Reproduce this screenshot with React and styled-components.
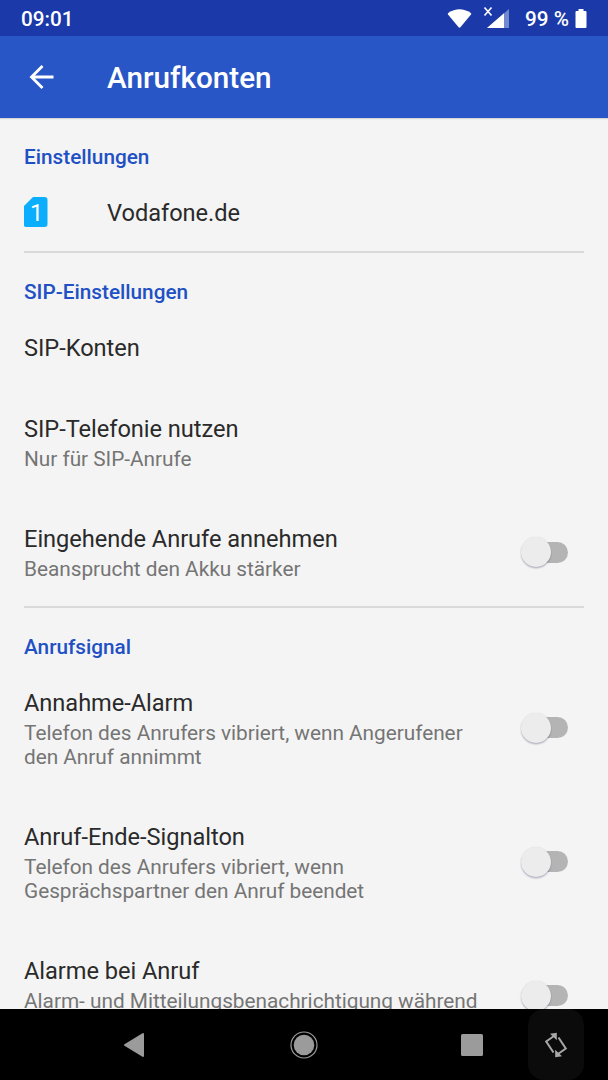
import React from "react";
import styled, { createGlobalStyle } from "styled-components";

const GlobalStyle = createGlobalStyle`
  * { box-sizing: border-box; }
  body { margin: 0; background: #000; }
`;

const Screen = styled.div`
  width: 608px;
  height: 1080px;
  display: flex;
  flex-direction: column;
  overflow: hidden;
  background: #f4f4f4;
  font-family: Roboto, "Liberation Sans", sans-serif;
`;

const StatusBar = styled.header`
  flex: 0 0 36px;
  display: flex;
  align-items: center;
  justify-content: space-between;
  padding: 2px 21px 0 21px;
  background: #1b39a8;
  color: #fff;
  font-size: 20.700px;
  font-weight: 500;
  line-height: 34px;
`;

const StatusIcons = styled.div`
  display: flex;
  align-items: center;
  svg { display: block; }
`;

const Percent = styled.span`
  margin: 0 6px 0 15px;
`;

const Toolbar = styled.div`
  flex: 0 0 82px;
  display: flex;
  align-items: center;
  padding-left: 29px;
  background: #2956c6;
  color: #fff;
  box-shadow: 0 1px 1px rgba(0, 0, 0, 0.12);
`;

const BackIcon = styled.svg`
  width: 26px;
  height: 26px;
  flex: none;
`;

const Title = styled.h1`
  margin: 2px 0 0 52px;
  font-size: 29.700px;
  font-weight: 500;
  line-height: 36px;
`;

const Content = styled.main`
  flex: 1 1 0;
  min-height: 0;
  overflow: hidden;
  padding: 0 24px;
`;

const Section = styled.section`
  & + & { border-top: 2px solid #d9d9d9; }
`;

const SectionTitle = styled.h2`
  height: 54px;
  margin: 0;
  padding-top: 26px;
  color: #2150c4;
  font-size: 20.750px;
  font-weight: 500;
  line-height: 26px;
`;

const Row = styled.div`
  height: ${(p) => p.$height}px;
  display: flex;
  padding-top: 26px;
`;

const SimSlot = styled.div`
  width: 83px;
  flex: none;
  margin-top: -2px;
`;

const Texts = styled.div`
  flex: 1;
  min-width: 0;
`;

const Label = styled.div`
  color: #2a2a2a;
  font-size: 23.625px;
  letter-spacing: -0.04px;
  line-height: 30px;
`;

const Summary = styled.div`
  margin-top: 3px;
  color: #757575;
  font-size: 20.800px;
  letter-spacing: -0.02px;
  line-height: 24px;
  white-space: pre-line;
`;

const SwitchSlot = styled.div`
  height: ${(p) => p.$height}px;
  display: flex;
  align-items: center;
`;

const Track = styled.div`
  width: 42px;
  height: 21px;
  margin-right: 16px;
  border-radius: 11px;
  background: #b4b4b4;
  display: flex;
  align-items: center;
`;

const Thumb = styled.div`
  flex: none;
  width: 30px;
  height: 30px;
  margin-left: -5.5px;
  border-radius: 50%;
  background: #ececec;
  box-shadow: 0 1.5px 1.5px rgba(60, 60, 110, 0.32), 0 0 1px rgba(0, 0, 0, 0.12);
`;

const NavBar = styled.nav`
  flex: 0 0 71px;
  display: grid;
  grid-template-columns: 50px 168px 172px 138px 56px 24px;
  background: #000;
`;

const NavButton = styled.div`
  display: flex;
  align-items: center;
  justify-content: center;
  grid-column: ${(p) => p.$column};
  border-radius: 16px;
  background: ${(p) => (p.$raised ? "#0b0b0b" : "transparent")};
  padding-left: ${(p) => p.$shift || 0}px;
`;

const Switch = ({ height }) => (
  <SwitchSlot $height={height}>
    <Track>
      <Thumb />
    </Track>
  </SwitchSlot>
);

const Preference = ({ label, summary, height, toggle, icon }) => (
  <Row $height={height}>
    {icon && <SimSlot>{icon}</SimSlot>}
    <Texts>
      <Label>{label}</Label>
      {summary && <Summary>{summary}</Summary>}
    </Texts>
    {toggle && <Switch height={toggle} />}
  </Row>
);

const SimIcon = () => (
  <svg width="25" height="31" viewBox="0.5 0 25 31">
    <path d="M9.500 1H21a3 3 0 0 1 3 3v24a3 3 0 0 1-3 3H3a3 3 0 0 1-3-3V10.500Z" fill="#0aaefc" />
    <text x="13" y="24.500" textAnchor="middle" fontSize="23.500" fontWeight="400" fill="#fff">1</text>
  </svg>
);

export default function App() {
  return (
    <>
      <GlobalStyle />
      <Screen>
        <StatusBar>
          <span>09:01</span>
          <StatusIcons>
            <svg width="66" height="30" viewBox="0 0 66 30">
              <path d="M4.200 9Q15.500 1.500 26.800 9Q27.600 9.800 27 10.600L16.400 23.300Q15.500 24.200 14.600 23.300L4 10.600Q3.400 9.800 4.200 9Z" fill="#fff" />
              <path d="M40.500 3.500l7 8M47.500 3.500l-7 8" stroke="#fff" strokeWidth="1.600" />
              <path d="M43 24L65 5V24Z" fill="#7289ce" />
              <path d="M43 24L60 9.300V24Z" fill="#fff" />
            </svg>
            <Percent>99 %</Percent>
            <svg width="12" height="20" viewBox="0 0 12 20">
              <path d="M3.500 0h5v2H10.500Q11.500 2 11.500 3V18Q11.500 19 10.500 19H1.500Q.5 19 .5 18V3Q.5 2 1.500 2H3.500Z" fill="#fff" />
            </svg>
          </StatusIcons>
        </StatusBar>
        <Toolbar>
          <BackIcon viewBox="0 0 26 26" fill="none" stroke="#fff" strokeWidth="2.800">
            <path d="M24.500 13H3M13.500 2L2.500 13L13.500 24" />
          </BackIcon>
          <Title>Anrufkonten</Title>
        </Toolbar>
        <Content>
          <Section>
            <SectionTitle>Einstellungen</SectionTitle>
            <Preference label="Vodafone.de" height={79} icon={<SimIcon />} />
          </Section>
          <Section>
            <SectionTitle>SIP-Einstellungen</SectionTitle>
            <Preference label="SIP-Konten" height={81} />
            <Preference label="SIP-Telefonie nutzen" summary="Nur für SIP-Anrufe" height={110} />
            <Preference
              label="Eingehende Anrufe annehmen"
              summary="Beansprucht den Akku stärker"
              height={108}
              toggle={56}
            />
          </Section>
          <Section>
            <SectionTitle>Anrufsignal</SectionTitle>
            <Preference
              label="Annahme-Alarm"
              summary={"Telefon des Anrufers vibriert, wenn Angerufener\nden Anruf annimmt"}
              height={134}
              toggle={79}
            />
            <Preference
              label="Anruf-Ende-Signalton"
              summary={"Telefon des Anrufers vibriert, wenn\nGesprächspartner den Anruf beendet"}
              height={134}
              toggle={79}
            />
            <Preference
              label="Alarme bei Anruf"
              summary="Alarm- und Mitteilungsbenachrichtigung während"
              height={134}
              toggle={79}
            />
          </Section>
        </Content>
        <NavBar>
          <NavButton $column={2}>
            <svg width="22" height="26" viewBox="0 0 22 26">
              <path d="M20 2V24L2 13Z" fill="#9b9b9b" stroke="#9b9b9b" strokeWidth="2" strokeLinejoin="round" />
            </svg>
          </NavButton>
          <NavButton $column={3}>
            <svg width="28" height="28" viewBox="0 0 28 28">
              <circle cx="14" cy="14" r="13" fill="none" stroke="#9b9b9b" strokeWidth="1.200" />
              <circle cx="14" cy="14" r="10.300" fill="#9b9b9b" />
            </svg>
          </NavButton>
          <NavButton $column={4} $shift={25}>
            <svg width="24" height="24" viewBox="0 0 24 24">
              <rect x="1" y="1" width="22" height="22" rx="1.500" fill="#9b9b9b" />
            </svg>
          </NavButton>
          <NavButton $column={5} $raised>
            <svg width="24" height="28" viewBox="0 0 24 28" fill="none" stroke="#a8a8a8" strokeWidth="2">
              <path d="M9.500 21.500L2.200 10.500L10 5M14.500 6.500L21.800 17.500L14 23" />
              <path d="M6 2.800L12.800 1.800V9.200ZM18 25.200L11.200 26.200V18.800Z" fill="#a8a8a8" stroke="none" />
            </svg>
          </NavButton>
        </NavBar>
      </Screen>
    </>
  );
}
